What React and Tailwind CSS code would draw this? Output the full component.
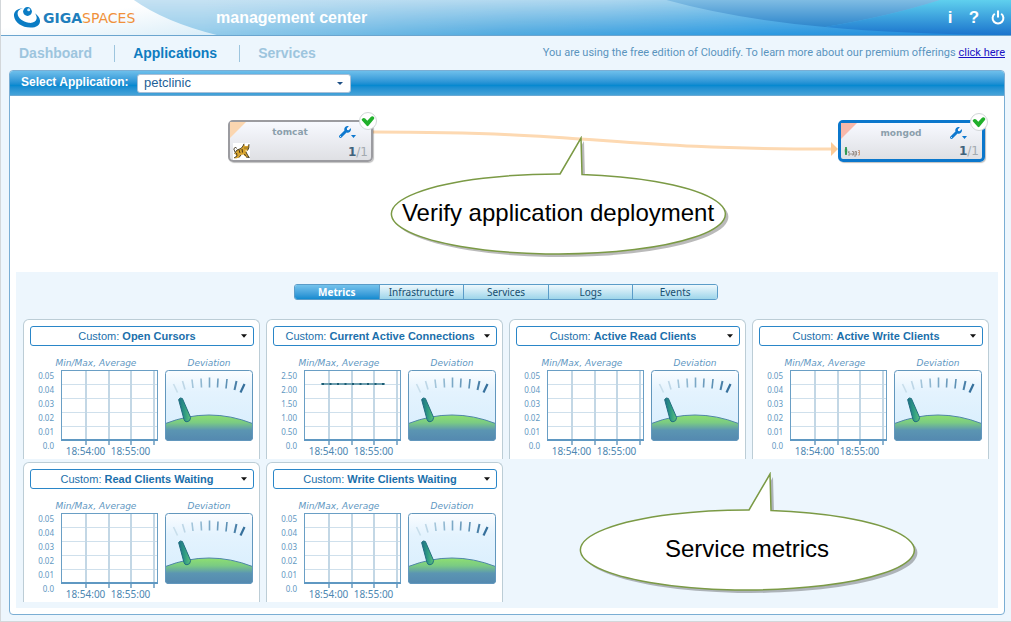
import React from "react";
import { FaWrench } from "react-icons/fa";

const sans = "font-['Liberation_Sans',Arial,sans-serif]";
const noto = "font-['Noto_Sans',Tahoma,sans-serif]";
const roboto = "font-['Roboto',Tahoma,sans-serif]";
const wide = "font-['DejaVu_Sans',Verdana,sans-serif]";

const zeroScale = ["0.05", "0.04", "0.03", "0.02", "0.01", "0.0"];
const connectionScale = ["2.50", "2.00", "1.50", "1.00", "0.50", "0.0"];

const metrics = [
  { name: "Open Cursors", scale: zeroScale },
  { name: "Current Active Connections", scale: connectionScale, line: true },
  { name: "Active Read Clients", scale: zeroScale },
  { name: "Active Write Clients", scale: zeroScale },
  { name: "Read Clients Waiting", scale: zeroScale },
  { name: "Write Clients Waiting", scale: zeroScale },
];

const tabs = ["Metrics", "Infrastructure", "Services", "Logs", "Events"];

function Logo() {
  return (
    <a href="#home" className="flex items-center" aria-label="GigaSpaces">
      <svg width="28" height="24" viewBox="0 0 28 24" aria-hidden="true">
        <path
          d="M10 2.2C4 2.4 .6 5.6 1 10C1.600 16.400 9 21.600 17.500 21.600C23.500 21.600 27.400 18.800 27 14.400C26.700 11.800 25 9.400 22 7.200C23.400 9.400 23.900 11 23.600 12.800C23 16 19.600 17.400 15.600 16.800C9.800 16 4.800 12 4.600 7.600C4.500 5 6.400 3 10 2.200Z"
          fill="#0a7cc4"
        />
        <circle cx="14.500" cy="5.500" r="4.400" fill="#0a7cc4" />
        <circle cx="15.700" cy="3.800" r="1.500" fill="#d9effb" />
      </svg>
      <span className={`${wide} ml-0.5 text-[14px] leading-4`}>
        <span className="font-bold text-[#1f7fbd]">GIGA</span>
        <span className="text-[#f0913a]">SPACES</span>
      </span>
    </a>
  );
}

function Header() {
  return (
    <header className="relative h-9 border-b border-[#6ba5cf]">
      <svg
        className="absolute inset-0 h-full w-full"
        viewBox="0 0 1011 35"
        preserveAspectRatio="none"
        aria-hidden="true"
      >
        <defs>
          <linearGradient id="hTop" x1="0" x2="1" y1="0" y2="0">
            <stop offset="0.2" stopColor="#c6e2f3" />
            <stop offset="0.6" stopColor="#add7ef" />
            <stop offset="1" stopColor="#69bfe9" />
          </linearGradient>
          <linearGradient id="hBottom" x1="0" x2="1" y1="0" y2="0">
            <stop offset="0.2" stopColor="#93cbea" />
            <stop offset="0.5" stopColor="#4fa9df" />
            <stop offset="0.75" stopColor="#2c99e0" />
            <stop offset="1" stopColor="#1f86da" />
          </linearGradient>
          <linearGradient id="hFade" x1="0" x2="0" y1="0" y2="1">
            <stop offset="0" stopColor="#000" />
            <stop offset="1" stopColor="#fff" />
          </linearGradient>
          <mask id="hMask">
            <rect width="1011" height="35" fill="url(#hFade)" />
          </mask>
          <linearGradient id="hLens" x1="0" x2="0" y1="0" y2="1">
            <stop offset="0" stopColor="#7fbce3" />
            <stop offset="1" stopColor="#2d86cc" />
          </linearGradient>
          <linearGradient id="hRight" x1="0" x2="0" y1="0" y2="1">
            <stop offset="0" stopColor="#5fd0ee" />
            <stop offset="1" stopColor="#1b74cd" />
          </linearGradient>
          <linearGradient id="hLeft" x1="0" x2="1" y1="0" y2="1">
            <stop offset="0.4" stopColor="#ffffff" />
            <stop offset="1" stopColor="#d9edf8" />
          </linearGradient>
        </defs>
        <rect width="1011" height="35" fill="url(#hTop)" />
        <rect width="1011" height="35" fill="url(#hBottom)" mask="url(#hMask)" />
        <path d="M666 0Q735 19 825 27Q890 16 940 0Z" fill="url(#hLens)" />
        <path d="M940 0Q890 16 825 27Q900 34 1011 35V0Z" fill="url(#hRight)" />
        <path d="M0 0H133Q164 22 216 35H0Z" fill="url(#hLeft)" />
      </svg>
      <div className="relative flex h-[35px] items-center pl-3 pr-[5px]">
        <div className="w-[203px]">
          <Logo />
        </div>
        <h1 className="text-[16px] font-bold leading-5 text-white">management center</h1>
        <div className="ml-auto flex items-center gap-2 text-white">
          <button type="button" aria-label="Information" className="w-4 text-[17px] font-bold leading-4">
            i
          </button>
          <button type="button" aria-label="Help" className="w-4 text-[17px] font-bold leading-4">
            ?
          </button>
          <button type="button" aria-label="Log out" className="flex w-4 justify-center">
            <svg width="14" height="15" viewBox="0 0 14 15" fill="none" stroke="currentColor" strokeWidth="2">
              <path d="M3.800 3.800A5.400 5.400 0 1 0 10.200 3.800M7 .5V7.500" />
            </svg>
          </button>
        </div>
      </div>
    </header>
  );
}

function Nav() {
  const divider = "ml-[22px] mr-[18px] h-[17px] w-px bg-[#9dc5de]";
  return (
    <div className="flex h-[34px] items-center justify-between pl-[18px] pr-1.5">
      <nav className="flex items-center text-[14px] font-bold leading-5">
        <a href="#dashboard" className="text-[#9dc5de]">Dashboard</a>
        <span className={divider} />
        <a href="#applications" className="text-[#0f7cc0]">Applications</a>
        <span className={divider} />
        <a href="#services" className="text-[#9dc5de]">Services</a>
      </nav>
      <p className={`${roboto} text-[11px] leading-4 text-[#5a94bd]`}>
        You are using the free edition of Cloudify. To learn more about our premium offerings{" "}
        <a href="#premium" className="text-[#1a12c4] underline">click here</a>
      </p>
    </div>
  );
}

function TomcatIcon() {
  return (
    <svg width="17" height="17" viewBox="0 0 17 17" aria-hidden="true">
      <rect width="17" height="17" fill="#fff" />
      <path d="M1.500 10.500L4 7L8 5.500L10 3L11 .8L12 3H14.500L16 1.200L15.800 5L14.500 7.500L13 9L14.500 12L16.300 14.500L13 14L10.500 11.500L8 12L6 14.500L3 15.500L1 15L4 13Z" fill="#d9a52f" />
      <path d="M1.500 10.500L4 7L8 5.500L10 3L11 .8M16 1.200L15.800 5L14.500 7.500M13 9L14.500 12L16.300 14.500L13 14M1 15L4 13L3.500 10M6 14.500L8 12M2 9L.8 6L2.500 4L3.500 5.500" fill="none" stroke="#3b3320" strokeWidth=".9" />
      <path d="M6 7L7 10M9 6L9.500 9.500M12 4.500V5.500M14 4.500V5.500M11.500 11L12.500 13" stroke="#43351a" strokeWidth="1" />
      <path d="M12.200 7.500L14 7L13 8.500Z" fill="#fff8dc" />
    </svg>
  );
}

function JsonIcon() {
  return (
    <svg width="17" height="17" viewBox="0 0 17 17" fill="none" aria-hidden="true">
      <path d="M2 5C1 7 1 10 2 13C3 10 3 7 2 5Z" fill="#23944a" stroke="#23944a" />
      <path d="M5.500 9.500H4.500V11H6V13H4M8 9.500H9.500V13H8V11M11 9.500V15M11 9.500H12.500V13H11" stroke="#9a928c" />
      <path d="M14 8.500H15.500V13H14M14 10.500H15.500" stroke="#c7a086" />
    </svg>
  );
}

function ServiceNode({ name, selected, corner, icon }) {
  return (
    <div
      className={`relative h-[42px] shrink-0 rounded-[5px] bg-linear-to-b from-[#f7f9ff] to-[#dfe0e4] shadow-[1px_1px_1px_rgba(0,0,0,0.25)] ${
        selected ? "w-[147px] border-3 border-[#0b77cc]" : "w-[145px] border-2 border-[#9b9ba0]"
      }`}
    >
      <svg className="absolute left-0 top-0" width="16" height="16" aria-hidden="true">
        <path d="M0 0H16L0 16Z" fill={corner} />
      </svg>
      <div className="flex h-full flex-col justify-between pl-[3px] pr-[3px]">
        <div className="flex h-5 items-center justify-end pr-3">
          <span className={`${wide} flex-1 pl-7 text-center text-[9px] font-bold leading-4 text-[#8b9fac]`}>{name}</span>
          <button type="button" aria-label={`${name} actions`} className="ml-5 flex items-end text-[#0d78cf]">
            <FaWrench size={12} />
            <svg width="5" height="3" viewBox="0 0 5 3" aria-hidden="true">
              <path d="M0 0H5L2.500 3Z" fill="currentColor" />
            </svg>
          </button>
        </div>
        <div className="flex h-[17px] items-end justify-between">
          {icon}
          <span className={`${wide} text-[12px] leading-4 text-[#a3aab0]`}>
            <b className="text-[#41637c]">1</b>/1
          </span>
        </div>
      </div>
      <span className="absolute -right-[6px] -top-[10px] flex h-[18px] w-[18px] items-center justify-center rounded-full border border-[#d2d6d8] bg-white">
        <svg width="14" height="12" viewBox="0 0 14 12" aria-hidden="true">
          <path d="M.8 4.200Q2.600 2 4.200 3.600L6.300 5.800L10 1.800Q11.600 .6 13.200 2.400Q13.600 3.200 12.800 4.200L7.400 10.800Q6.400 11.600 5.500 10.600L1 5.400Q.4 4.800 .8 4.200Z" fill="#20b02b" />
        </svg>
      </span>
    </div>
  );
}

function Callout({ children, className }) {
  return (
    <div className={`absolute h-[122px] w-[340px] ${className}`}>
      <svg className="absolute inset-0" width="340" height="122" viewBox="0 0 340 122" aria-hidden="true">
        <path d="M170 38L191 2L192 38.400A167 40 0 1 1 170 38Z" fill="#000" opacity=".27" transform="translate(3 3)" />
        <path d="M170 38L191 2L192 38.400A167 40 0 1 1 170 38Z" fill="#fff" stroke="#7b9a45" strokeWidth="1.500" />
      </svg>
      <p className="relative pr-1 pt-[62px] text-center text-[24px] leading-[30px] text-black">{children}</p>
    </div>
  );
}

function Topology() {
  return (
    <section aria-label="Application topology" className="relative h-[176px] pl-[218px] pr-[19px] pt-[24px]">
      <div className="flex items-start">
        <ServiceNode name="tomcat" corner="#fbd6b0" icon={<TomcatIcon />} />
        <div className="flex h-[42px] min-w-0 flex-1">
          <svg className="h-full min-w-0 flex-1" viewBox="0 0 458 42" preserveAspectRatio="none" aria-hidden="true">
            <path d="M0 12C230 12 230 29 458 29" fill="none" stroke="#fdd9b2" strokeWidth="3" />
          </svg>
          <svg width="7" height="42" aria-hidden="true">
            <path d="M0 22L7 29L0 36Z" fill="#fdcb96" />
          </svg>
        </div>
        <ServiceNode name="mongod" selected corner="#f8b8aa" icon={<JsonIcon />} />
      </div>
      <Callout className="left-[380px] top-[40px]">Verify application deployment</Callout>
    </section>
  );
}

function Plot({ line }) {
  return (
    <svg width="97" height="75" viewBox="0 0 97 75" aria-hidden="true">
      <rect x=".5" y=".5" width="96" height="70" fill="#fff" />
      <path d="M1 14.500H96M1 28.500H96M1 42.500H96M1 56.500H96" stroke="#cfe0ec" />
      <path d="M25 1V70M48 1V70M70 1V70M93 1V70" stroke="#c3d7e5" strokeWidth="2" />
      <path d="M25 71V75M48 71V75M70 71V75M93 71V75" stroke="#8fb4cf" strokeWidth="2" />
      <rect x=".5" y=".5" width="96" height="70" fill="none" stroke="#6a9fc5" />
      <path d="M0 70H97" stroke="#5f98c2" strokeWidth="2" />
      {line && (
        <>
          <path d="M17 14H81" stroke="#6f9fb0" strokeWidth="2" />
          <path d="M18 14H82" stroke="#1c5d74" strokeWidth="2" strokeDasharray="2 5.500" />
        </>
      )}
    </svg>
  );
}

function Gauge({ id }) {
  return (
    <svg width="88" height="71" viewBox="0 0 88 71" aria-hidden="true">
      <defs>
        <linearGradient id={`sky${id}`} x1="0" x2="0" y1="0" y2="1">
          <stop offset="0" stopColor="#fbfdff" />
          <stop offset=".3" stopColor="#e4f3fe" />
          <stop offset="1" stopColor="#d6edfd" />
        </linearGradient>
        <linearGradient id={`hill${id}`} x1="0" x2="0" y1="0" y2="1">
          <stop offset="0" stopColor="#8fe070" />
          <stop offset=".3" stopColor="#7acb83" />
          <stop offset=".6" stopColor="#5b95b2" />
          <stop offset="1" stopColor="#5489b0" />
        </linearGradient>
        <linearGradient id={`needle${id}`} x1="0" x2="1" y1="0" y2="0">
          <stop offset="0" stopColor="#1d6f86" />
          <stop offset=".5" stopColor="#2e9a83" />
          <stop offset="1" stopColor="#5cc27a" />
        </linearGradient>
      </defs>
      <rect x=".5" y=".5" width="87" height="70" rx="3" fill={`url(#sky${id})`} />
      <path d="M.5 53.500Q44 36.500 87.500 53.500V67.500Q87.500 70.500 84.500 70.500H3.500Q.5 70.500 .5 67.500Z" fill={`url(#hill${id})`} stroke="#4f86a8" strokeWidth="1" />
      <g strokeWidth="1.600">
        <path d="M8.500 14L12.500 22.500" stroke="#c8deeb" />
        <path d="M17.500 11L20 19.500" stroke="#bdd6e6" />
        <path d="M27 9.500L28 18" stroke="#a3c5da" />
        <path d="M36 8.500L36.500 17.500" stroke="#90b8d1" />
        <path d="M44.500 7.500V17.500" stroke="#7ba8c6" />
        <path d="M53 8.500L52.500 17.500" stroke="#6c9cbd" />
        <path d="M62 9L61 18.500" stroke="#5c90b4" />
        <path d="M71.500 11L69.500 20" stroke="#4a80a8" strokeWidth="2" />
        <path d="M79.500 14L75.500 22.500" stroke="#36709c" strokeWidth="2.200" />
      </g>
      <path d="M13.600 29.500Q15 27 17.400 28.500L25.600 47.500Q25.500 51.500 22 51.800Q19.500 51.800 19 49.500Z" fill={`url(#needle${id})`} stroke="#226e80" strokeWidth="1" />
      <rect x=".5" y=".5" width="87" height="70" rx="3" fill="none" stroke="#6297bd" />
    </svg>
  );
}

function MetricCard({ metric, index }) {
  const id = `metric-${index}`;
  const caption = `${wide} h-[14px] text-center text-[9px] italic leading-[14px] text-[#5f98c2]`;
  return (
    <article className="h-[140px] overflow-hidden rounded-t-md border border-b-0 border-[#bccdd6] bg-white pl-1.5 pr-[5px] pt-1.5">
      <div className="relative flex h-5 items-center rounded-[3px] border border-[#2a86c8] text-[11px] leading-4 text-[#1b6fab]">
        <div className="flex min-w-0 flex-1 justify-center pr-2.5">
          <label htmlFor={id} className="whitespace-pre">Custom: </label>
          <select id={id} className="appearance-none bg-transparent font-bold outline-none field-sizing-content">
            <option>{metric.name}</option>
          </select>
        </div>
        <svg className="pointer-events-none absolute right-1.5" width="6" height="4" viewBox="0 0 7 4" aria-hidden="true">
          <path d="M0 0H7L3.500 4Z" fill="#111" />
        </svg>
      </div>
      <div className="mt-2.5 flex gap-[7px]">
        <div className="w-32">
          <h3 className={`${caption} pl-1`}>Min/Max, Average</h3>
          <div className="flex gap-[7px]">
            <ol className={`${noto} -mt-px w-6 text-right text-[8px] leading-[14px] text-[#5f98c2]`}>
              {metric.scale.map((value) => (
                <li key={value}>{value}</li>
              ))}
            </ol>
            <div>
              <Plot line={metric.line} />
              <div className={`${noto} flex text-[10px] leading-3 text-[#4d87b2]`}>
                <span className="ml-0.5 w-[45px] text-center">18:54:00</span>
                <span className="w-[45px] text-center">18:55:00</span>
              </div>
            </div>
          </div>
        </div>
        <div>
          <h3 className={caption}>Deviation</h3>
          <Gauge id={index} />
        </div>
      </div>
    </article>
  );
}

function Details() {
  return (
    <section aria-label="Service details" className="relative mx-1.5 mb-1.5 bg-[#edf6fd] pb-1.5 pl-[7px] pr-[9px] pt-3">
      <div role="tablist" className={`${noto} mx-auto flex h-4 w-[424px] overflow-hidden rounded-[3px] border border-[#5b9cc8] text-[10px] leading-[14px]`}>
        {tabs.map((tab, i) => (
          <button
            key={tab}
            type="button"
            role="tab"
            aria-selected={i === 0}
            className={
              i === 0
                ? "flex-1 basis-0 bg-linear-to-b from-[#74c3ec] to-[#0f8bd0] font-bold text-white"
                : "flex-1 basis-0 border-l border-[#5b9cc8] bg-linear-to-b from-[#eef8fd] to-[#9dd5ea] text-[#174f70]"
            }
          >
            {tab}
          </button>
        ))}
      </div>
      <div className="mt-[19px] grid grid-cols-4 gap-x-1.5 gap-y-[3px]">
        {metrics.map((metric, i) => (
          <MetricCard key={metric.name} metric={metric} index={i} />
        ))}
      </div>
      <Callout className="left-[563px] top-[200px]">Service metrics</Callout>
    </section>
  );
}

export default function App() {
  return (
    <div className={`${sans} border-b border-l border-[#d3d7da] bg-[#edf6fd]`}>
      <Header />
      <Nav />
      <main className="mb-1.5 ml-2 mr-1.5 overflow-hidden rounded-[4px] border border-[#7aaed4] bg-white">
        <div className="flex h-[25px] items-center border-b border-[#6aa9d4] bg-linear-to-b from-[#6dbfeb] via-[#0589d0] via-60% to-[#45a3d8] pl-[11px]">
          <label htmlFor="application" className="w-[116px] pb-0.5 text-[12px] font-bold leading-4 text-white">
            Select Application:
          </label>
          <div className="relative flex items-center">
            <select
              id="application"
              className="h-[19px] w-[214px] appearance-none rounded-[3px] border border-[#a9bfd6] bg-white pl-1.5 text-[13px] leading-4 text-[#1f5f97] outline-none"
            >
              <option>petclinic</option>
            </select>
            <svg className="pointer-events-none absolute right-2" width="6" height="3" viewBox="0 0 6 3" aria-hidden="true">
              <path d="M0 0H6L3 3Z" fill="#1d4f85" />
            </svg>
          </div>
        </div>
        <Topology />
        <Details />
      </main>
    </div>
  );
}
